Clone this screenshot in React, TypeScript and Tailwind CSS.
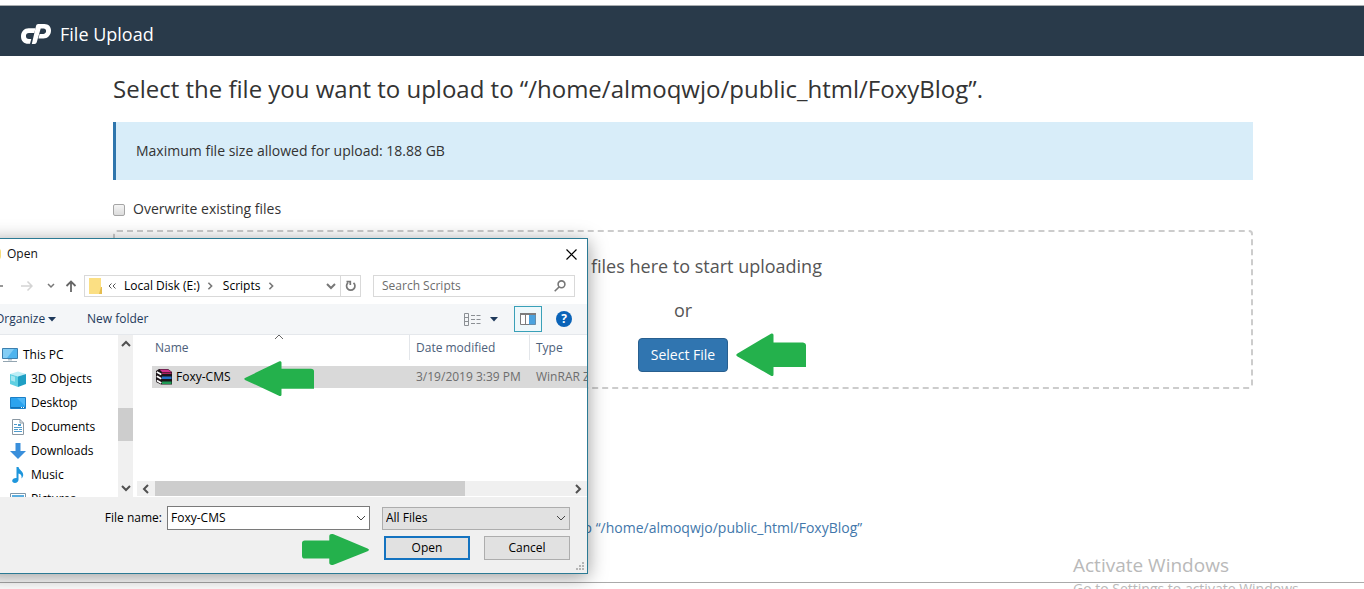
import type { ReactNode } from 'react';

const places = [
  { name: '3D Objects', icon: <CubeIcon /> },
  { name: 'Desktop', icon: <DesktopIcon /> },
  { name: 'Documents', icon: <DocumentIcon /> },
  { name: 'Downloads', icon: <DownloadIcon /> },
  { name: 'Music', icon: <MusicIcon /> },
  { name: 'Pictures', icon: <PictureIcon /> },
];

function Logo() {
  return (
    <svg viewBox="0 0 30 20" className="h-5 w-[30px]" fill="#fff" aria-hidden="true">
      <path d="M7.6 4.300h6.900l-1.200 4.600H8a3 3 0 0 0 0 6.100h2.300L9 19.800H7.300C2.900 19.800 0 16.600 0 12.400 0 7.700 3.300 4.300 7.600 4.300z" />
      <path d="M17.200 0h6.200C27.500 0 30 2.800 30 6.400c0 4.600-3.300 8-7.600 8h-5l1.200-4.500h3.600c1.700 0 2.900-1.300 2.900-2.900 0-1.500-1-2.400-2.500-2.400h-2.900L15.800 18c-.3 1.200-1.100 1.900-2.300 1.900h-2.700L15 2c.3-1.300 1-2 2.200-2z" />
    </svg>
  );
}

function Chevron({ dir, className = '' }: { dir: 'up' | 'down' | 'left' | 'right'; className?: string }) {
  const d = {
    up: 'M1 7l4-4 4 4',
    down: 'M1 3l4 4 4-4',
    left: 'M7 1L3 5l4 4',
    right: 'M3 1l4 4-4 4',
  }[dir];
  return (
    <svg viewBox="0 0 10 10" className={`shrink-0 ${className}`} fill="none" stroke="currentColor" aria-hidden="true">
      <path d={d} />
    </svg>
  );
}

function Caret() {
  return (
    <svg viewBox="0 0 8 5" className="h-[5px] w-2 shrink-0" fill="#1e395b" aria-hidden="true">
      <path d="M0 0h8L4 4.500z" />
    </svg>
  );
}

function Arrow({ dir, className }: { dir: 'left' | 'right'; className: string }) {
  return (
    <svg viewBox="0 0 70 43" preserveAspectRatio="none" className={`pointer-events-none absolute ${className}`} fill="#24b14c" aria-hidden="true">
      {dir === 'left' ? (
        <path d="M1.500 20.500L35 .7c1.500-.8 2.500 0 2.500 1.500v7.300H67q3 .5 3 3V34H37.500v7.500c0 1.500-1 2-2.500 1.200L1.500 23.500q-2.500-1.500 0-3z" />
      ) : (
        <path d="M68.500 20L33 .5c-2.500-1-4.500 0-4.500 2.500v6H3Q0 9.500 0 12.500V30q0 4 3 4h25.500v6c0 2.500 2 3.500 4.500 2.500L68.500 24q3-2 0-4z" />
      )}
    </svg>
  );
}

function Icon({ children }: { children: ReactNode }) {
  return (
    <svg viewBox="0 0 16 16" className="h-4 w-4 shrink-0" fill="none" aria-hidden="true">
      {children}
    </svg>
  );
}

function ComputerIcon() {
  return (
    <Icon>
      <path d="M.5 1.500h15v10H.5z" fill="#4fb4ee" stroke="#3d7fae" />
      <path d="M1 2h11L5 11H1z" fill="#83cdf5" />
      <path d="M6 12h4v1.500H6z" fill="#b9c6cf" />
      <path d="M1 14.500h14" stroke="#93a5b1" />
    </Icon>
  );
}

function CubeIcon() {
  return (
    <Icon>
      <path d="M0 3l8-2.500L16 3 8 5.500z" fill="#bdeef6" />
      <path d="M0 3l8 2.500V16L0 13z" fill="#5fd0e2" />
      <path d="M16 3L8 5.500V16l8-3z" fill="#1f9fc4" />
      <path d="M1 4.500l4 1.200v5L1 9.500z" fill="#a5e6f0" />
    </Icon>
  );
}

function DesktopIcon() {
  return (
    <Icon>
      <path d="M.5 2.500h15v11H.5z" fill="#2ba3ee" stroke="#1b7fc6" />
      <path d="M15 3v8L7 3z" fill="#4db7f7" />
      <path d="M1 12.500h14" stroke="#1470b3" />
      <path d="M11 12.500h1m1 0h1" stroke="#fff" />
    </Icon>
  );
}

function DocumentIcon() {
  return (
    <Icon>
      <path d="M2.500.5H10L13.500 4v11.500h-11z" fill="#fff" stroke="#8a98a3" />
      <path d="M10 .5V4h3.500" stroke="#8a98a3" />
      <path d="M4 5.500h3M4 8.500h8M4 10.500h4M4 12.500h8M9 10.500h3" stroke="#4f9ccd" />
      <path d="M8 5h3v2H8z" fill="#4f9ccd" />
    </Icon>
  );
}

function DownloadIcon() {
  return (
    <Icon>
      <path d="M5.500 0h5v8H16l-8 8-8-8h5.500z" fill="#3a8fdb" />
    </Icon>
  );
}

function MusicIcon() {
  return (
    <Icon>
      <path d="M6.500 0h2c.5 3 4.700 4.300 4.700 7.700 0 1.600-.7 2.800-1.700 3.800.6-2.800-.8-4.600-3-5v6.300c0 1.800-1.700 3.200-3.600 3.200-1.600 0-2.700-.9-2.700-2.200 0-1.700 2-3 4.300-2.800z" fill="#1e96dc" />
    </Icon>
  );
}

function PictureIcon() {
  return (
    <Icon>
      <path d="M.5 2.500h15v11H.5z" fill="#fff" stroke="#7e96a8" />
      <path d="M2 4h12v8H2z" fill="#5aaee0" />
    </Icon>
  );
}

// stack of three books
function ArchiveIcon() {
  return (
    <Icon>
      <path d="M3 0h9l4 3v12.500H5L0 13V2z" fill="#1c1418" />
      <path d="M3.500.5h8.500L15.500 3H6z" fill="#d0308c" />
      <path d="M6 3.500h9.500v1.500H6z" fill="#a81f5c" />
      <path d="M6 7.500h9.500v2.500H6z" fill="#2470c8" />
      <path d="M6 12.500h9.500V15H6z" fill="#1f9a55" />
      <path d="M.8 3L5.300 5.500M.8 7.200l4.500 2.500M.8 11.500l4.500 2.500" stroke="#fff" strokeWidth="1.700" />
    </Icon>
  );
}

function TitleBar() {
  return (
    <div className="flex h-[33px] items-center pb-[3px] pl-[6px] pr-[10px]">
      <span className="h-3 w-[10px] shrink-0 rounded-r-sm bg-[#f6dc7c]" />
      <h2 className="ml-[6px] flex-1 text-[#111]">Open</h2>
      <button type="button" aria-label="Close" className="text-black">
        <svg viewBox="0 0 11 11" className="h-[11px] w-[11px]" stroke="currentColor" strokeWidth="1.200" aria-hidden="true">
          <path d="M.5.5l10 10M10.500.5l-10 10" />
        </svg>
      </button>
    </div>
  );
}

function NavBar() {
  return (
    <div className="flex h-8 items-center pb-[5px] pl-[6px] pr-3">
      <button type="button" aria-label="Back" className="text-[#777]">
        <svg viewBox="0 0 12 12" className="h-3 w-3" fill="none" stroke="currentColor" strokeWidth="1.500" aria-hidden="true">
          <path d="M12 6H1M6 1L1 6l5 5" />
        </svg>
      </button>
      <button type="button" aria-label="Forward" className="ml-[18px] text-[#d4d4d4]">
        <svg viewBox="0 0 12 12" className="h-3 w-3" fill="none" stroke="currentColor" strokeWidth="1.500" aria-hidden="true">
          <path d="M0 6h11M6.500 1.500L11 6l-4.500 4.500" />
        </svg>
      </button>
      <button type="button" aria-label="Recent locations" className="ml-[14px] text-[#777]">
        <svg viewBox="0 0 8 8" className="h-2 w-2" fill="none" stroke="currentColor" strokeWidth="1.500" aria-hidden="true">
          <path d="M1 2l3 3 3-3" />
        </svg>
      </button>
      <button type="button" aria-label="Up" className="ml-[10px] text-[#666]">
        <svg viewBox="0 0 12 12" className="h-3 w-3" fill="none" stroke="currentColor" strokeWidth="1.800" aria-hidden="true">
          <path d="M6 12V1.500M1.500 6L6 1.500 10.500 6" />
        </svg>
      </button>
      <div className="ml-[7px] flex h-[22px] w-[277px] items-center border border-[#d9d9d9] pl-1">
        <svg viewBox="0 0 13 16" className="h-4 w-[13px]" aria-hidden="true">
          <path d="M0 0h12v9h1v7H0z" fill="#fbdf83" />
          <path d="M12 9h1v7h-3z" fill="#e5bd4f" />
        </svg>
        <svg viewBox="0 0 8 6" className="ml-[6px] mr-2 h-[6px] w-2" fill="none" stroke="#555" aria-hidden="true">
          <path d="M3.500.5L1 3l2.500 2.500M7.500.5L5 3l2.500 2.500" />
        </svg>
        <span>Local Disk (E:)</span>
        <Chevron dir="right" className="mx-[6px] h-2 w-2 stroke-2 text-[#777]" />
        <span className="ml-[3px]">Scripts</span>
        <Chevron dir="right" className="ml-[7px] h-2 w-2 stroke-2 text-[#777]" />
        <button type="button" aria-label="Previous locations" className="ml-auto mr-1 text-[#777]">
          <Chevron dir="down" className="h-[10px] w-[10px] stroke-2" />
        </button>
        <button type="button" aria-label="Refresh" className="flex h-full w-5 items-center justify-center border-l border-[#d9d9d9] text-[#777]">
          <svg viewBox="0 0 12 12" className="h-3 w-3" fill="none" stroke="currentColor" strokeWidth="1.700" aria-hidden="true">
            <path d="M3 2.800a4.200 4.200 0 1 0 5.500 0M1.500 1.700h3.800V5" />
          </svg>
        </button>
      </div>
      <div className="ml-3 flex h-[22px] flex-1 items-center border border-[#d9d9d9] pl-2 pr-2">
        <input type="text" aria-label="Search Scripts" placeholder="Search Scripts" className="min-w-0 flex-1 outline-none placeholder:text-[#6d6d6d]" />
        <svg viewBox="0 0 12 12" className="h-3 w-3" fill="none" stroke="#777" strokeWidth="1.600" aria-hidden="true">
          <circle cx="7.500" cy="4.300" r="3.400" />
          <path d="M5 7L.7 11.300" />
        </svg>
      </div>
    </div>
  );
}

function Toolbar() {
  return (
    <div className="flex h-[31px] items-center border-b border-[#e5e8ec] bg-[#f4f6f8] pl-[10px] pr-[15px] text-[#1e395b]">
      <button type="button" className="flex w-[61px] items-center justify-between">
        Organize <Caret />
      </button>
      <button type="button" className="ml-[31px]">New folder</button>
      <button type="button" aria-label="Change your view" className="ml-auto flex items-center gap-[9px]">
        <svg viewBox="0 0 17 13" className="h-[13px] w-[17px]" fill="none" stroke="#8b8f94" aria-hidden="true">
          <path d="M.5.5h4v12h-4zM.5 4.500h4M.5 8.500h4" />
          <path d="M7 2.500h4M12.500 2.500h4M7 6.500h4M12.500 6.500h4M7 10.500h4M12.500 10.500h4" />
        </svg>
        <Caret />
      </button>
      <button type="button" aria-label="Show the preview pane" className="ml-4 flex h-[26px] w-7 items-center justify-center border border-[#39a0b8] bg-[#eef8fb]">
        <svg viewBox="0 0 16 12" className="h-3 w-4" aria-hidden="true">
          <path d="M.5.5h15v11H.5z" fill="#fff" stroke="#7d7d7d" />
          <path d="M0 0h16v2H0z" fill="#7d7d7d" />
          <path d="M9 2h6.500v9.500H9z" fill="#4aa3df" />
          <path d="M5.500 2v9.500" stroke="#7d7d7d" />
        </svg>
      </button>
      <button type="button" aria-label="Get help" className="ml-[14px] flex h-4 w-4 items-center justify-center rounded-full bg-[#0a63b8] font-bold text-white">
        ?
      </button>
    </div>
  );
}

function Sidebar() {
  return (
    <nav aria-label="Places" className="flex w-[148px] shrink-0 overflow-hidden">
      <ul className="flex-1 pt-2">
        <li className="flex h-6 items-center gap-[5px] pl-[17px]">
          <ComputerIcon /> This PC
        </li>
        {places.map((place) => (
          <li key={place.name} className="flex h-6 items-center gap-[5px] pl-[25px]">
            {place.icon} {place.name}
          </li>
        ))}
      </ul>
      <div className="flex w-[15px] flex-col items-center bg-[#f0f0f0] py-1 text-[#505050]">
        <Chevron dir="up" className="h-[10px] w-[10px] stroke-2" />
        <div className="mt-[59px] h-[33px] w-full bg-[#cdcdcd]" />
        <Chevron dir="down" className="mt-auto h-[10px] w-[10px] stroke-2" />
      </div>
    </nav>
  );
}

function FileList() {
  return (
    <div className="ml-1 flex min-w-0 flex-1 flex-col overflow-hidden">
      <div className="pl-[15px]">
        <table className="w-full table-fixed text-left">
          <thead className="text-[#4c607a]">
            <tr>
              <th className="relative w-[257px] p-0 font-normal">
                <Chevron dir="up" className="absolute left-[122px] top-[-3px] h-[10px] w-[10px] text-[#666]" />
                <div className="mb-[6px] h-[25px] pl-[3px] leading-[25px]">Name</div>
              </th>
              <th className="w-[120px] p-0 font-normal">
                <div className="mb-[6px] h-[25px] border-l border-[#e3e6ea] pl-[6px] leading-[25px]">Date modified</div>
              </th>
              <th className="p-0 font-normal">
                <div className="mb-[6px] h-[25px] border-l border-[#e3e6ea] pl-[6px] leading-[25px]">Type</div>
              </th>
            </tr>
          </thead>
          <tbody>
            <tr className="h-[22px] bg-[#d9d9d9] text-[#6d6d6d]">
              <td className="relative p-0 text-black">
                <div className="flex items-center gap-1 pl-1">
                  <ArchiveIcon /> Foxy-CMS
                </div>
                <Arrow dir="left" className="left-[92px] top-[-5px] h-[35px] w-[70px]" />
              </td>
              <td className="p-0 pl-[7px]">3/19/2019 3:39 PM</td>
              <td className="overflow-hidden whitespace-nowrap p-0 pl-[7px]">WinRAR ZIP archive</td>
            </tr>
          </tbody>
        </table>
      </div>
      <div className="mb-px mt-auto flex h-[15px] items-center bg-[#f0f0f0] pl-1 pr-1 text-[#505050]">
        <Chevron dir="left" className="h-[10px] w-[10px] stroke-2" />
        <div className="ml-1 h-full w-[310px] bg-[#cdcdcd]" />
        <Chevron dir="right" className="ml-auto h-[10px] w-[10px] stroke-2" />
      </div>
    </div>
  );
}

function OpenDialog() {
  return (
    <section
      role="dialog"
      aria-label="Open"
      className="absolute left-[-16px] top-[238px] w-[604px] border border-[#2b7a94] bg-white font-['Open_Sans',sans-serif] text-xs text-black shadow-[0_3px_18px_rgba(0,0,0,0.4)]"
    >
      <TitleBar />
      <NavBar />
      <Toolbar />
      <div className="flex h-[162px]">
        <Sidebar />
        <FileList />
      </div>
      <div className="relative bg-[#f0f0f0] pb-[13px] pr-[17px] pt-[9px]">
        <div className="flex items-center justify-end">
          <label htmlFor="file-name" className="mr-[5px]">File name:</label>
          <div className="flex h-6 w-[203px] items-center border border-[#7a7a7a] bg-white pl-[3px] pr-[3px]">
            <input id="file-name" type="text" defaultValue="Foxy-CMS" className="min-w-0 flex-1 outline-none" />
            <Chevron dir="down" className="h-[10px] w-[10px] text-[#444]" />
          </div>
          <div className="relative ml-3 flex items-center">
            <select aria-label="File type" className="h-[23px] w-[188px] appearance-none border border-[#adadad] bg-[#e1e1e1] pl-[3px]">
              <option>All Files</option>
            </select>
            <Chevron dir="down" className="pointer-events-none absolute right-1 h-[10px] w-[10px] text-[#444]" />
          </div>
        </div>
        <div className="mt-[6px] flex justify-end gap-[14px]">
          <button type="button" className="relative h-6 w-[86px] border-2 border-[#1473c0] bg-[#e1e1e1]">
            Open
            <Arrow dir="right" className="left-[-84px] top-[-4px] h-[31px] w-[67px]" />
          </button>
          <button type="button" className="h-6 w-[86px] border border-[#adadad] bg-[#e1e1e1]">
            Cancel
          </button>
        </div>
        <svg viewBox="0 0 8 8" className="absolute bottom-[3px] right-[3px] h-2 w-2" fill="#b5b5b5" aria-hidden="true">
          <path d="M6 0h2v2H6zM3 3h2v2H3zM6 3h2v2H6zM0 6h2v2H0zM3 6h2v2H3zM6 6h2v2H6z" />
        </svg>
      </div>
    </section>
  );
}

export default function App() {
  return (
    <div className="relative flex min-h-screen flex-col overflow-hidden bg-white font-['Open_Sans',sans-serif] text-sm text-[#333]">
      <header className="mt-[5px] flex h-[51px] items-center border-t border-[#a9adb0] bg-[#293a4a] pl-[21px] pt-[6px]">
        <Logo />
        <h1 className="ml-[9px] text-lg text-white">File Upload</h1>
      </header>

      <div className="flex-1 pl-[2px]">
        <main className="mx-auto max-w-[1140px]">
          <h2 className="pt-[15px] text-2xl leading-9">
            Select the file you want to upload to “/home/almoqwjo/public_html/FoxyBlog”.
          </h2>
          <div className="mt-[15px] border-l-[3px] border-[#2f76ad] bg-[#d8edf9] py-[19px] pl-5">
            Maximum file size allowed for upload: 18.88 GB
          </div>
          <label className="mt-[19px] flex items-center gap-2">
            <input type="checkbox" className="mt-[2px] h-3 w-3 appearance-none rounded-[2px] border border-[#a5a5a5] bg-gradient-to-b from-[#f4f4f4] to-[#dcdcdc]" />
            Overwrite existing files
          </label>
          <div className="mt-[11px] flex flex-col items-center rounded border-2 border-dashed border-[#ccc] pb-[15px] pt-[22px] text-lg leading-6 text-[#555]">
            <p>Drop files here to start uploading</p>
            <p className="mt-5">or</p>
            <div className="relative mt-4">
              <button type="button" className="block h-[34px] w-[90px] rounded-sm border border-[#285f8f] bg-[#3075b0] text-sm text-white">
                Select File
              </button>
              <Arrow dir="left" className="left-[98px] top-[-5px] h-[43px] w-[70px]" />
            </div>
          </div>
          <p className="mt-[129px] flex justify-center">
            <a href="#" className="flex items-center gap-1 text-[#4277ab]">
              <svg viewBox="0 0 14 14" className="h-[14px] w-[14px]" aria-hidden="true">
                <circle cx="7" cy="7" r="6.500" fill="currentColor" />
                <path d="M11 7H4M7 3.500L3.500 7 7 10.500" fill="none" stroke="#fff" strokeWidth="1.800" />
              </svg>
              Go Back to “/home/almoqwjo/public_html/FoxyBlog”
            </a>
          </p>
        </main>
      </div>

      <footer className="h-[7px] border-t border-[#aaa]" />

      <OpenDialog />

      <div className="pointer-events-none absolute left-[1073px] top-[553px] whitespace-nowrap font-['Open_Sans',sans-serif] text-[#b9b9b9]">
        <p className="text-[19px] leading-6">Activate Windows</p>
        <p className="text-sm leading-6">Go to Settings to activate Windows.</p>
      </div>
    </div>
  );
}
